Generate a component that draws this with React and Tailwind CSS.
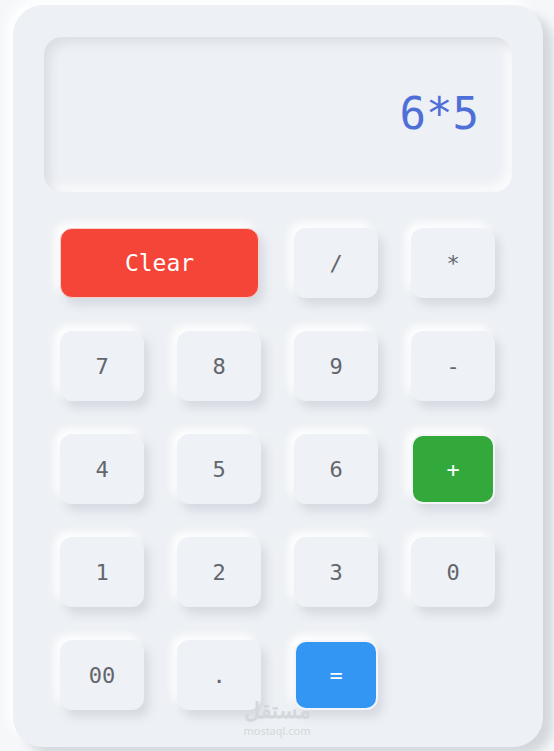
import React, { useState } from 'react';

const keys = [
  ['/', 'gray'], ['*', 'gray'],
  ['7', 'gray'], ['8', 'gray'], ['9', 'gray'], ['-', 'gray'],
  ['4', 'gray'], ['5', 'gray'], ['6', 'gray'], ['+', 'green'],
  ['1', 'gray'], ['2', 'gray'], ['3', 'gray'], ['0', 'gray'],
  ['00', 'gray'], ['.', 'gray'], ['=', 'blue'],
];

const styles = {
  gray: 'bg-[#eef1f5] text-[#62666c] shadow-[5px_7px_10px_#d6dae1,-5px_-5px_10px_#ffffff]',
  green: 'bg-[#32a93a] text-white border-2 border-[#f3f5f8] shadow-[5px_7px_10px_#d6dae1,-5px_-5px_10px_#ffffff]',
  blue: 'bg-[#3396f3] text-white border-2 border-[#f3f5f8] shadow-[5px_7px_10px_#d6dae1,-5px_-5px_10px_#ffffff]',
};

function App() {
  const [value, setValue] = useState('6*5');

  const press = (k) => {
    if (k === '=') {
      try {
        setValue(String(Function('return (' + value + ')')()));
      } catch (e) {
        setValue('Error');
      }
      return;
    }
    setValue(value + k);
  };

  return (
    <div className="h-[751px] overflow-hidden bg-[#f5f7f9] pt-[5px] pl-[13px] pr-[11px] font-['DejaVu_Sans_Mono',monospace]">
      <div className="h-[742px] rounded-[30px] bg-[#edf0f4] px-[31px] pt-[32px] shadow-[10px_8px_10px_#d4d8dc,-6px_-6px_12px_#ffffff]">
        <div className="flex h-[155px] items-center justify-end rounded-[18px] bg-[#edf0f4] px-[33px] pb-[2px] text-[44px] text-[#4f6fd8] shadow-[inset_6px_6px_10px_#dcdfe5,inset_-6px_-6px_10px_#fafbfc]">
          {value}
        </div>

        <div className="mt-[36px] grid grid-cols-[repeat(4,84px)] auto-rows-[70px] gap-x-[33px] gap-y-[33px] px-[16px]">
          <button
            onClick={() => setValue('')}
            className="col-span-2 w-[199px] rounded-[12px] border border-[#f7d0cc] bg-[#f44538] text-[23px] text-white shadow-[5px_7px_10px_#d6dae1,-5px_-5px_10px_#ffffff]"
          >
            Clear
          </button>
          {keys.map(([k, kind]) => (
            <button
              key={k}
              onClick={() => press(k)}
              className={`rounded-[12px] text-[22px] ${styles[kind]}`}
            >
              {k}
            </button>
          ))}
        </div>

        <div className="mt-[-14px] ml-[198px] flex w-[70px] flex-col items-center gap-[3px] text-[#d4d7db] font-['Noto_Sans',sans-serif]">
          <span className="text-[22px] font-bold leading-[26px]">مستقل</span>
          <span className="text-[11px] leading-[11px]">mostaql.com</span>
        </div>
      </div>
    </div>
  );
}

export default App;
